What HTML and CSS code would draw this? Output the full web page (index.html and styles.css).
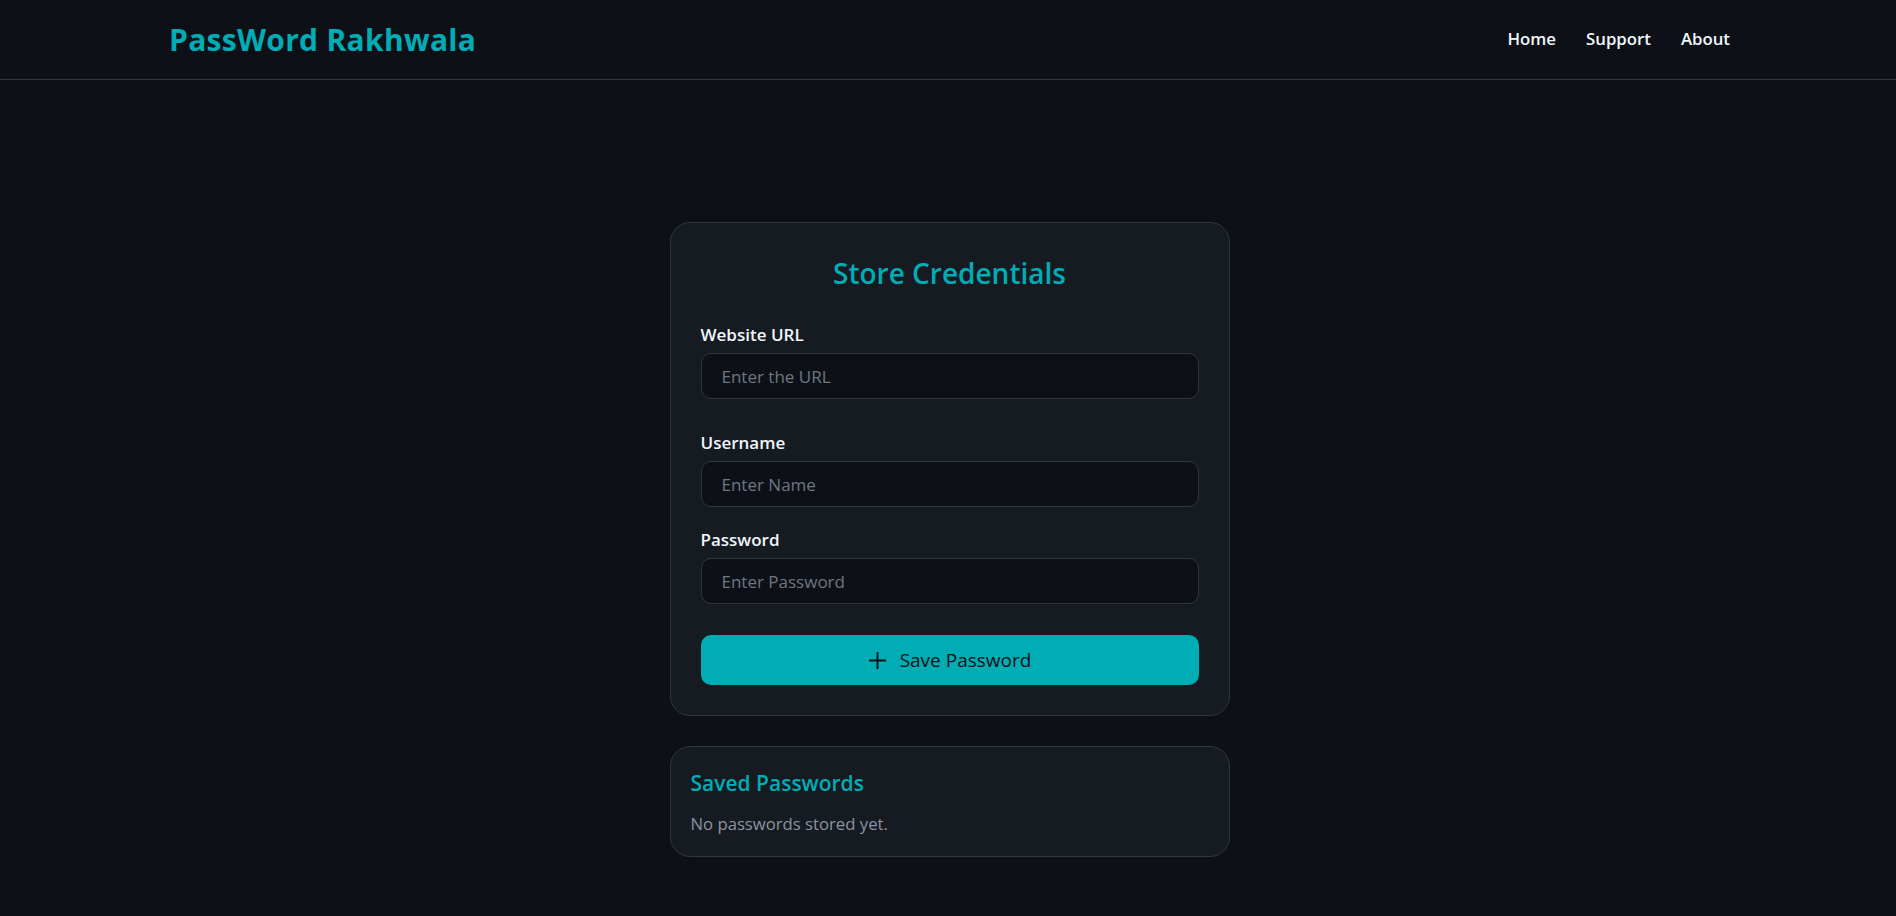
FILE: index.html
```html
<!DOCTYPE html>
<html lang="en">
<head>
<meta charset="utf-8">
<title>PassWord Rakhwala</title>
<link rel="stylesheet" href="styles.css">
</head>
<body>
<header class="site-header">
  <div class="header-inner">
    <a class="logo" href="#">PassWord Rakhwala</a>
    <nav class="nav">
      <a href="#">Home</a>
      <a href="#">Support</a>
      <a href="#">About</a>
    </nav>
  </div>
</header>
<main class="main">
  <section class="card form-card">
    <h1 class="card-title">Store Credentials</h1>
    <form class="form">
      <div class="field field-first">
        <label class="label" for="url">Website URL</label>
        <input class="input" id="url" type="text" placeholder="Enter the URL">
      </div>
      <div class="field">
        <label class="label" for="user">Username</label>
        <input class="input" id="user" type="text" placeholder="Enter Name">
      </div>
      <div class="field">
        <label class="label" for="pass">Password</label>
        <input class="input" id="pass" type="password" placeholder="Enter Password">
      </div>
      <button class="btn" type="button">
        <svg class="btn-icon" viewBox="0 0 20 20" width="20" height="20" aria-hidden="true">
          <path d="M10 1v18M1 10h18" fill="none" stroke="currentColor" stroke-width="2"/>
        </svg>
        <span>Save Password</span>
      </button>
    </form>
  </section>
  <section class="card saved-card">
    <h2 class="saved-title">Saved Passwords</h2>
    <p class="empty">No passwords stored yet.</p>
  </section>
</main>
</body>
</html>
```
FILE: styles.css
```css
* { box-sizing: border-box; }
html, body { margin: 0; padding: 0; }
body {
  background: #0d1117;
  color: #f0f6fc;
  font-family: "Open Sans", "Noto Sans", sans-serif;
  min-height: 916px;
}
a { text-decoration: none; color: inherit; }

.site-header {
  border-bottom: 1px solid #30363d;
}
.header-inner {
  height: 79px;
  display: flex;
  align-items: center;
  justify-content: space-between;
  padding: 0 166px 0 169px;
}
.logo {
  color: #00adb5;
  font-size: 30px;
  font-weight: 700;
  letter-spacing: 0.3px;
  line-height: 40px;
  margin-top: 1px;
}
.nav {
  display: flex;
  gap: 30px;
  font-size: 16.8px;
  font-weight: 600;
  line-height: 24px;
  margin-top: -2px;
}
.nav a { color: #f0f6fc; }

.main {
  display: flex;
  flex-direction: column;
  align-items: center;
  gap: 30px;
  padding: 142px 0 40px 3px;
}
.card {
  width: 560px;
  background: #161b22;
  border: 1px solid #30363d;
  border-radius: 20px;
}
.form-card {
  padding: 30px;
}
.card-title {
  margin: 0 0 30px;
  text-align: center;
  color: #00adb5;
  font-size: 28px;
  font-weight: 600;
  line-height: 40px;
}
.form {
  display: flex;
  flex-direction: column;
  gap: 21px;
}
.field {
  display: flex;
  flex-direction: column;
  gap: 6px;
}
.field-first { margin-bottom: 11px; }
.label {
  font-size: 17px;
  font-weight: 600;
  line-height: 24px;
  color: #f0f6fc;
}
.input {
  height: 46px;
  width: 100%;
  background: #0d1117;
  border: 1px solid #30363d;
  border-radius: 10px;
  padding: 0 20px;
  color: #f0f6fc;
  font-family: inherit;
  font-size: 17px;
  outline: none;
}
.input::placeholder { color: #6e7681; }
.btn {
  margin-top: 10px;
  height: 50px;
  width: 100%;
  border: 0;
  border-radius: 10px;
  background: #00adb5;
  color: #0d1117;
  font-family: inherit;
  font-size: 19px;
  font-weight: 500;
  display: flex;
  align-items: center;
  justify-content: center;
  gap: 13px;
  cursor: pointer;
}
.btn-icon { width: 19px; height: 19px; flex: none; }

.saved-card {
  padding: 20px;
}
.saved-title {
  margin: 0;
  color: #00adb5;
  font-size: 21px;
  font-weight: 600;
  line-height: 32px;
}
.empty {
  margin: 13px 0 0;
  color: #8b949e;
  font-size: 16.7px;
  line-height: 24px;
}
```
